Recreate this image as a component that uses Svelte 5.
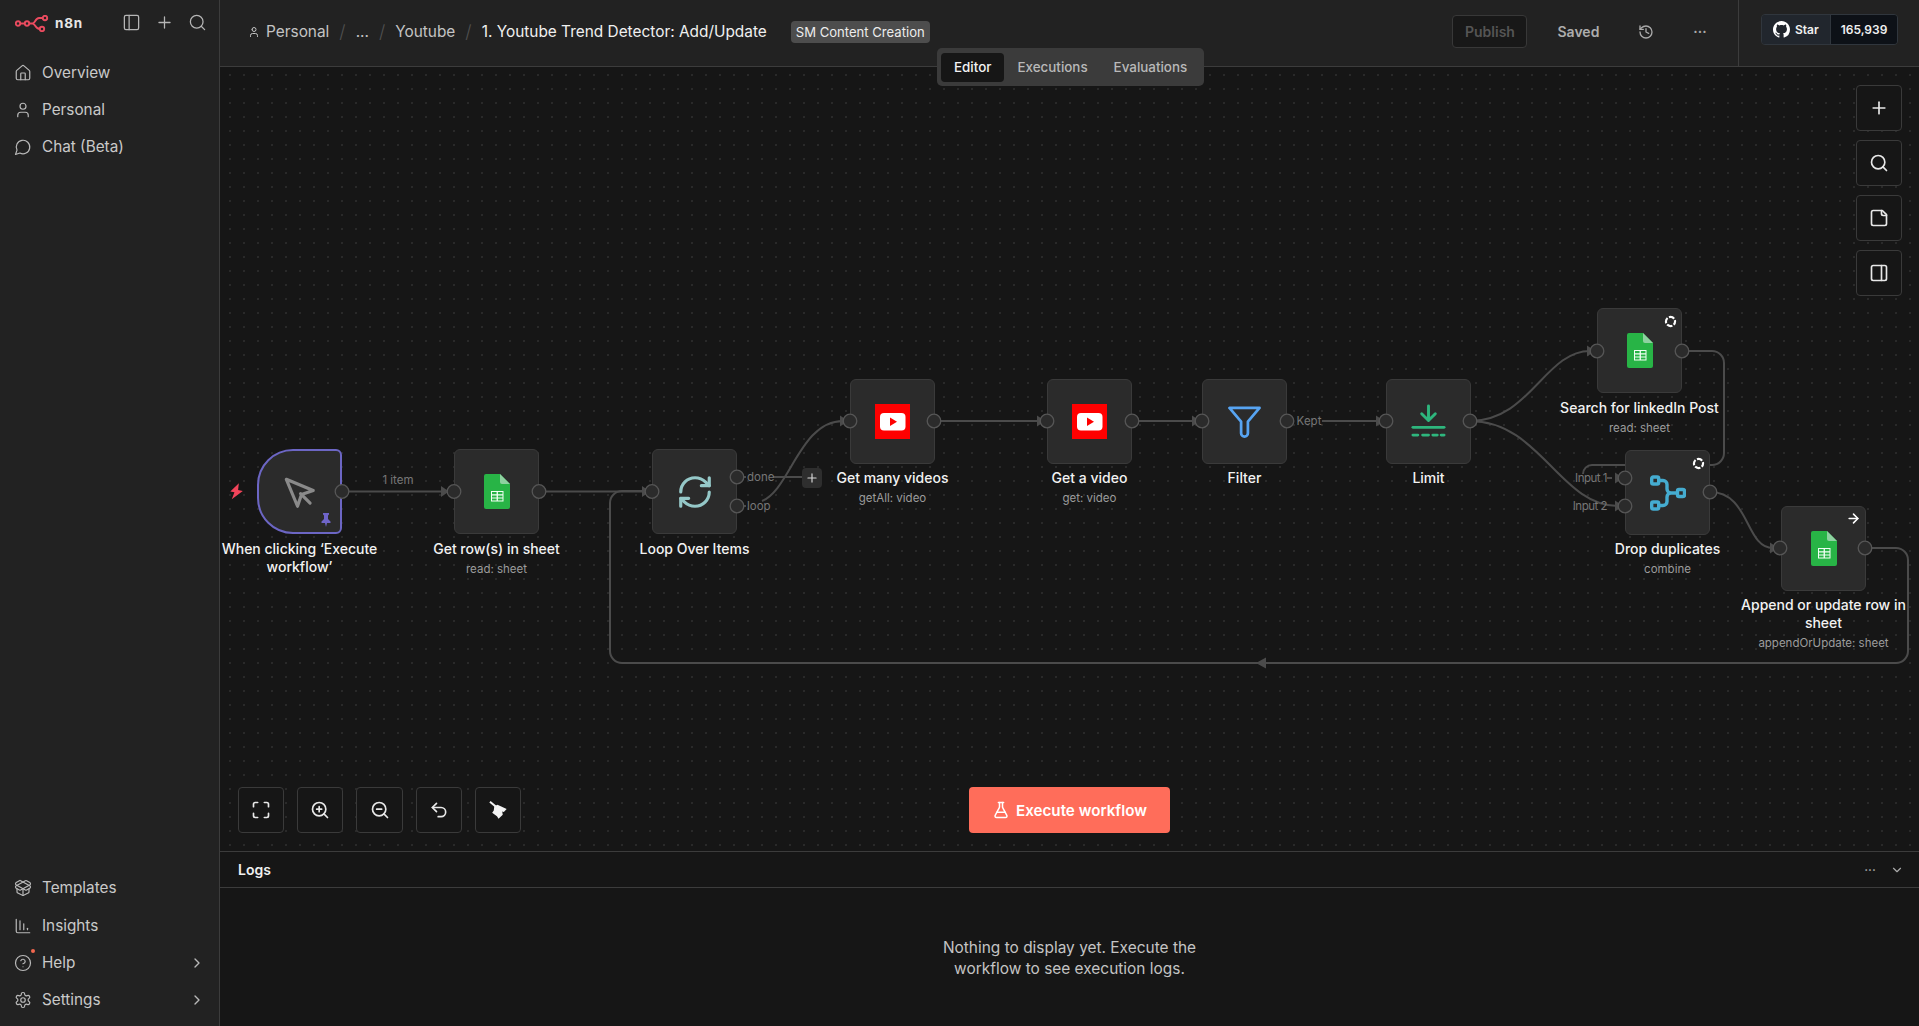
<script>
  const c = (x, y, r) => `M${x - r} ${y}a${r} ${r} 0 1 0 ${2 * r} 0a${r} ${r} 0 1 0 ${-2 * r} 0`;
  const I = {
    house: ['M15 21v-8a1 1 0 0 0-1-1h-4a1 1 0 0 0-1 1v8', 'M3 10a2 2 0 0 1 .709-1.528l7-5.999a2 2 0 0 1 2.582 0l7 5.999A2 2 0 0 1 21 10v9a2 2 0 0 1-2 2H5a2 2 0 0 1-2-2z'],
    user: ['M19 21v-2a4 4 0 0 0-4-4H9a4 4 0 0 0-4 4v2', c(12, 7, 4)],
    chat: ['M7.9 20A9 9 0 1 0 4 16.1L2 22Z'],
    panelL: ['M5 3h14a2 2 0 0 1 2 2v14a2 2 0 0 1-2 2H5a2 2 0 0 1-2-2V5a2 2 0 0 1 2-2z', 'M9 3v18'],
    panelR: ['M5 3h14a2 2 0 0 1 2 2v14a2 2 0 0 1-2 2H5a2 2 0 0 1-2-2V5a2 2 0 0 1 2-2z', 'M15 3v18'],
    plus: ['M5 12h14', 'M12 5v14'],
    search: [c(11, 11, 8), 'm21 21-4.3-4.3'],
    box: ['M12 22v-9', 'M15.17 2.21a1.67 1.67 0 0 1 1.63 0L21 4.57a1.93 1.93 0 0 1 0 3.36L8.82 14.79a1.655 1.655 0 0 1-1.64 0L3 12.43a1.93 1.93 0 0 1 0-3.36z', 'M20 13v3.87a2.06 2.06 0 0 1-1.11 1.83l-6 3.08a1.93 1.93 0 0 1-1.78 0l-6-3.08A2.06 2.06 0 0 1 4 16.87V13', 'M21 12.43a1.93 1.93 0 0 0 0-3.36L8.83 2.2a1.64 1.64 0 0 0-1.63 0L3 4.57a1.93 1.93 0 0 0 0 3.36l12.18 6.86a1.636 1.636 0 0 0 1.63 0z'],
    chart: ['M3 3v16a2 2 0 0 0 2 2h16', 'M18 17v-2', 'M13 17V9', 'M8 17V5'],
    help: [c(12, 12, 10), 'M9.09 9a3 3 0 0 1 5.83 1c0 2-3 3-3 3', 'M12 17h.01'],
    gear: ['M12.22 2h-.44a2 2 0 0 0-2 2v.18a2 2 0 0 1-1 1.73l-.43.25a2 2 0 0 1-2 0l-.15-.08a2 2 0 0 0-2.73.73l-.22.38a2 2 0 0 0 .73 2.73l.15.1a2 2 0 0 1 1 1.72v.51a2 2 0 0 1-1 1.74l-.15.09a2 2 0 0 0-.73 2.73l.22.38a2 2 0 0 0 2.73.73l.15-.08a2 2 0 0 1 2 0l.43.25a2 2 0 0 1 1 1.73V20a2 2 0 0 0 2 2h.44a2 2 0 0 0 2-2v-.18a2 2 0 0 1 1-1.73l.43-.25a2 2 0 0 1 2 0l.15.08a2 2 0 0 0 2.73-.73l.22-.39a2 2 0 0 0-.73-2.73l-.15-.08a2 2 0 0 1-1-1.74v-.5a2 2 0 0 1 1-1.74l.15-.09a2 2 0 0 0 .73-2.73l-.22-.38a2 2 0 0 0-2.73-.73l-.15.08a2 2 0 0 1-2 0l-.43-.25a2 2 0 0 1-1-1.73V4a2 2 0 0 0-2-2z', c(12, 12, 3)],
    chev: ['m9 18 6-6-6-6'],
    chevD: ['m6 9 6 6 6-6'],
    history: ['M3 12a9 9 0 1 0 9-9 9.75 9.75 0 0 0-6.74 2.74L3 8', 'M3 3v5h5', 'M12 7v5l4 2'],
    note: ['M16 3H5a2 2 0 0 0-2 2v14a2 2 0 0 0 2 2h14a2 2 0 0 0 2-2V8Z', 'M15 3v4a2 2 0 0 0 2 2h4'],
    max: ['M8 3H5a2 2 0 0 0-2 2v3', 'M21 8V5a2 2 0 0 0-2-2h-3', 'M16 21h3a2 2 0 0 0 2-2v-3', 'M3 16v3a2 2 0 0 0 2 2h3'],
    zoomIn: [c(11, 11, 8), 'm21 21-4.3-4.3', 'M11 8v6', 'M8 11h6'],
    zoomOut: [c(11, 11, 8), 'm21 21-4.3-4.3', 'M8 11h6'],
    undo: ['M9 14 4 9l5-5', 'M4 9h10.5a5.5 5.5 0 0 1 5.5 5.5a5.5 5.5 0 0 1-5.5 5.5H11'],
    flask: ['M14 2v6a2 2 0 0 0 .245.96l5.51 10.08A2 2 0 0 1 18 22H6a2 2 0 0 1-1.755-2.96l5.51-10.08A2 2 0 0 0 10 8V2', 'M6.453 15h11.094', 'M8.5 2h7'],
    pointer: ['M4 4l7.07 17 2.51-7.39L21 11.07z', 'm13 13 6 6'],
    loop: ['M3 12a9 9 0 0 1 9-9 9.75 9.75 0 0 1 6.74 2.74L21 8', 'M21 3v5h-5', 'M21 12a9 9 0 0 1-9 9 9.75 9.75 0 0 1-6.74-2.74L3 16', 'M8 16H3v5'],
    arrow: ['M5 12h14', 'm12 5 7 7-7 7']
  };

  const topNav = [['house', 'Overview'], ['user', 'Personal'], ['chat', 'Chat (Beta)']];
  const bottomNav = [['box', 'Templates', false], ['chart', 'Insights', false], ['help', 'Help', true], ['gear', 'Settings', true]];
  const rail = ['plus', 'search', 'note', 'panelR'];
  const tools = ['max', 'zoomIn', 'zoomOut', 'undo'];

  const nodes = [
    { x: 257, y: 449, kind: 'pointer', title: 'When clicking ‘Execute workflow’', trigger: true },
    { x: 454, y: 449, kind: 'sheet', title: 'Get row(s) in sheet', sub: 'read: sheet' },
    { x: 652, y: 449, kind: 'loop', title: 'Loop Over Items' },
    { x: 850, y: 379, kind: 'yt', title: 'Get many videos', sub: 'getAll: video', up: true },
    { x: 1047, y: 379, kind: 'yt', title: 'Get a video', sub: 'get: video', up: true },
    { x: 1202, y: 379, kind: 'filter', title: 'Filter', up: true },
    { x: 1386, y: 379, kind: 'limit', title: 'Limit', up: true },
    { x: 1597, y: 308, kind: 'sheet', title: 'Search for linkedIn Post', sub: 'read: sheet', badge: 'once' },
    { x: 1625, y: 450, kind: 'merge', title: 'Drop duplicates', sub: 'combine', badge: 'once', up: true },
    { x: 1781, y: 506, kind: 'sheet', title: 'Append or update row in sheet', sub: 'appendOrUpdate: sheet', badge: 'arrow', up: true }
  ];

  const edges = [
    'M342 491.5H445', 'M539 491.5H645',
    'M1865 548H1896a12 12 0 0 1 12 12V651a12 12 0 0 1-12 12H622a12 12 0 0 1-12-12V503a12 12 0 0 1 12-12H645',
    'M737 477H746', 'M773 477H802', 'M737 506H746',
    'M762 501C790 490 800 421 843 421',
    'M934 421H1040', 'M1132 421H1195', 'M1287 421H1292', 'M1322 421H1379',
    'M1470 421C1530 421 1545 351 1590 351',
    'M1470 421C1540 421 1560 506 1618 506',
    'M1682 351H1712a12 12 0 0 1 12 12V453a12 12 0 0 1-12 12H1592a9 9 0 0 0-9 9',
    'M1710 492C1750 492 1745 548 1773 548',
    'M1607 478H1612'
  ];
  const arrows = [[449, 491.5], [650, 491.5], [848, 421], [1045, 421], [1200, 421], [1384, 421], [1595, 351], [1623, 478], [1623, 506], [1778, 548]];
  const handles = [[342, 491.5], [454, 491.5], [539, 491.5], [652, 491.5], [737, 477], [737, 506], [850, 421], [934, 421], [1047, 421], [1132, 421], [1202, 421], [1287, 421], [1386, 421], [1470, 421], [1597, 351], [1682, 351], [1625, 478], [1625, 506], [1710, 492], [1780, 548], [1865, 548]];
  const labels = [['1 item', 398, 484, 'middle', ''], ['done', 747, 481, 'start', ''], ['loop', 747, 510, 'start', ''], ['Kept', 1309, 425, 'middle', ''], ['Input 1', 1607, 482, 'end', 'tight'], ['Input 2', 1607, 510, 'end', 'tight']];
</script>

{#snippet ic(name, cls = 'i18')}
  <svg class={cls} viewBox="0 0 24 24" fill="none" stroke="currentColor" stroke-width="2" stroke-linecap="round" stroke-linejoin="round">
    {#each I[name] as d}<path {d} />{/each}
  </svg>
{/snippet}

{#snippet nodeIcon(kind)}
  {#if kind === 'sheet'}
    <svg class="nicon sheet" viewBox="0 0 26 35">
      <path d="M2 0H16L26 10V33a2 2 0 0 1-2 2H2a2 2 0 0 1-2-2V2a2 2 0 0 1 2-2z" fill="#28b446" />
      <path d="M16 0L26 10H18a2 2 0 0 1-2-2z" fill="#8ed1a0" />
      <path d="M7 17h12.5v10.5H7z M8 18v2.2h4.6V18z M13.9 18v2.2h4.6V18z M8 21.5v2h4.6v-2z M13.9 21.5v2h4.6v-2z M8 24.6v2h4.6v-2z M13.9 24.6v2h4.6v-2z" fill="#f1fff4" fill-rule="evenodd" />
    </svg>
  {:else if kind === 'yt'}
    <svg class="nicon yt" viewBox="0 0 35 35">
      <rect width="35" height="35" fill="#ff0000" />
      <rect x="5" y="9" width="25.5" height="17.5" rx="4" fill="#fff" />
      <path d="M15 13.5l7 4.2-7 4.2z" fill="#ff0000" />
    </svg>
  {:else if kind === 'pointer'}
    <span class="pointer">{@render ic('pointer', 'nicon p')}</span>
  {:else if kind === 'loop'}
    <span class="loop">{@render ic('loop', 'nicon l')}</span>
  {:else if kind === 'filter'}
    <svg class="nicon f" viewBox="0 0 34 34" fill="none" stroke="#57a4f2" stroke-width="2.8" stroke-linejoin="round">
      <path d="M1.5 2H32.5L20.5 16V28a3.5 3.5 0 0 1-7 0V16z" />
    </svg>
  {:else if kind === 'limit'}
    <svg class="nicon" viewBox="0 0 36 36" fill="none" stroke="#2eb67d" stroke-width="3" stroke-linecap="round" stroke-linejoin="round">
      <path d="M18 2V16M11 10l7 7 7-7" />
      <path d="M2 24H34" />
      <path d="M2 32H7M12 32H18M22.500 32H27M31 32H34" />
    </svg>
  {:else if kind === 'merge'}
    <svg class="nicon m" viewBox="0 0 36 36" fill="none" stroke="#45acd0" stroke-width="3.4" stroke-linejoin="round">
      <rect x="1.700" y="2" width="7" height="7" rx="1.500" />
      <rect x="1.700" y="27" width="7" height="7" rx="1.500" />
      <rect x="27.500" y="14.500" width="7" height="7" rx="1.500" />
      <path d="M8.700 5.500H13a4 4 0 0 1 4 4V14a4 4 0 0 0 4 4h6.500M8.700 30.500H13a4 4 0 0 0 4-4V22a4 4 0 0 1 4-4" />
    </svg>
  {/if}
{/snippet}

<div class="app">
  <aside class="side">
    <div class="brand">
      <svg class="logo" viewBox="0 0 34 17" fill="none" stroke="#ea4b5f" stroke-width="1.900">
        <circle cx="3" cy="8.500" r="2.200" />
        <circle cx="12" cy="8.500" r="2.200" />
        <circle cx="30" cy="3" r="2.200" />
        <circle cx="27" cy="14" r="2.200" />
        <path d="M5.200 8.500H9.800M14.200 8.500H17.500C20.500 8.500 20 3 24 3H27.800M17.500 8.500C20.500 8.500 20 14 24.800 14" />
      </svg>
      <span class="wordmark">n8n</span>
      <div class="brand-actions">
        {@render ic('panelL', 'i19 thin')}
        {@render ic('plus', 'i19 thin')}
        {@render ic('search', 'i19 thin')}
      </div>
    </div>
    <nav class="nav">
      {#each topNav as [icon, text]}
        <div class="item">{@render ic(icon, 'i18 thin')}<span>{text}</span></div>
      {/each}
    </nav>
    <nav class="nav bottom">
      {#each bottomNav as [icon, text, more]}
        <div class="item">
          <span class="iconwrap">{@render ic(icon, 'i18 thin')}{#if icon === 'help'}<i class="dot"></i>{/if}</span>
          <span>{text}</span>
          {#if more}<span class="more">{@render ic('chev', 'i16')}</span>{/if}
        </div>
      {/each}
    </nav>
  </aside>

  <main class="main">
    <header class="head">
      <div class="crumbs">
        {@render ic('user', 'i12')}
        <span class="crumb first">Personal</span>
        <span class="sep">/</span>
        <span class="crumb">...</span>
        <span class="sep">/</span>
        <span class="crumb">Youtube</span>
        <span class="sep">/</span>
        <span class="title">1. Youtube Trend Detector: Add/Update</span>
        <span class="tag">SM Content Creation</span>
      </div>
      <div class="actions">
        <button class="publish">Publish</button>
        <span class="saved">Saved</span>
        <span class="ha h1">{@render ic('history', 'i16')}</span>
        <span class="ha h2">•••</span>
      </div>
      <div class="gh-wrap">
        <div class="gh">
          <span class="gh-l">
            <svg class="gh-mark" viewBox="0 0 16 16" fill="#fff"><path d="M8 0C3.58 0 0 3.58 0 8c0 3.54 2.290 6.530 5.470 7.590.4.070.55-.17.55-.38 0-.19-.01-.82-.01-1.490-2.010.37-2.530-.49-2.690-.94-.09-.23-.48-.94-.82-1.130-.28-.15-.68-.52-.01-.53.63-.01 1.080.58 1.230.82.72 1.210 1.870.87 2.330.66.07-.52.28-.87.51-1.070-1.780-.2-3.640-.89-3.640-3.950 0-.87.31-1.590.82-2.150-.08-.2-.36-1.020.08-2.120 0 0 .67-.21 2.200.82.64-.18 1.320-.27 2-.27.68 0 1.360.09 2 .27 1.530-1.040 2.200-.82 2.200-.82.44 1.100.16 1.920.08 2.120.51.56.82 1.270.82 2.150 0 3.070-1.870 3.750-3.650 3.950.29.25.54.73.54 1.480 0 1.070-.01 1.930-.01 2.200 0 .21.15.46.55.38A8.013 8.013 0 0016 8c0-4.420-3.580-8-8-8z" /></svg>
            Star
          </span>
          <span class="gh-r">165,939</span>
        </div>
      </div>
    </header>

    <div class="tabs">
      <span class="tab on">Editor</span>
      <span class="tab">Executions</span>
      <span class="tab">Evaluations</span>
    </div>

    <section class="canvas">
      <svg class="layer" viewBox="220 67 1699 784">
        {#each edges as d}<path {d} fill="none" stroke="#4b4b4b" stroke-width="2" />{/each}
        <path d="M1256 663l10-5.500v11z" fill="#4b4b4b" />
      </svg>

      {#each nodes as n}
        <div class="node" class:trigger={n.trigger} class:up={n.up} style:left="{n.x - 220}px" style:top="{n.y - 67}px">
          <div class="box">
            {@render nodeIcon(n.kind)}
            {#if n.badge === 'once'}
              <svg class="badge" viewBox="0 0 12 12" fill="none" stroke="#fff" stroke-width="2"><circle cx="6" cy="6" r="4.200" stroke-dasharray="5.200 1.400" stroke-dashoffset="2" /></svg>
            {:else if n.badge === 'arrow'}
              <span class="badge-a">{@render ic('arrow', 'i13')}</span>
            {/if}
            {#if n.trigger}
              <svg class="pin" viewBox="0 0 12 14" fill="#6f65c9"><path d="M3 0h6v1.500L8 2.500V6l2.500 2.500V10H7l-1 4-1-4H1.500V8.500L4 6V2.500L3 1.500z" /></svg>
            {/if}
          </div>
          <div class="cap">
            <div class="cap-t">{n.title}</div>
            {#if n.sub}<div class="cap-s">{n.sub}</div>{/if}
          </div>
        </div>
      {/each}

      <svg class="layer" viewBox="220 67 1699 784">
        {#each arrows as [x, y]}<path d="M{x} {y}l-8-5.500v11z" fill="#4b4b4b" />{/each}
        {#each handles as [x, y]}<circle cx={x} cy={y} r="6.800" fill="#2b2b2b" stroke="#565656" stroke-width="1.300" />{/each}
        {#each labels as [t, x, y, a, k]}<text {x} {y} text-anchor={a} class="elabel {k}">{t}</text>{/each}
      </svg>

      <svg class="bolt" viewBox="0 0 12 14" fill="#f2445a"><path d="M6.500 0L1 8h3.500L3.500 14 11 5.500H7z" transform="rotate(12 6 7)" /></svg>
      <span class="addbtn">{@render ic('plus', 'i14')}</span>

      <div class="rail">
        {#each rail as r}<span class="cbtn">{@render ic(r, 'i20')}</span>{/each}
      </div>

      <div class="tools">
        {#each tools as t}<span class="cbtn">{@render ic(t, 'i20')}</span>{/each}
        <span class="cbtn">
          <svg class="i18" viewBox="0 0 17 17" fill="#f2f2f2"><path d="M.3 1.300L1.500 .1 7 4.600 5.700 5.900z" /><path d="M5 5L8 3.500 16.700 7.500 14 10.500 12.500 10 13 13 9 16.700 7.500 14.500 3 11 4.500 9z" /></svg>
        </span>
      </div>

      <button class="exec">{@render ic('flask', 'i18')}Execute workflow</button>
    </section>

    <section class="logs">
      <div class="logs-head">
        <span class="logs-t">Logs</span>
        <span class="logs-a">
          <span class="logs-d">•••</span>
          {@render ic('chevD', 'i14')}
        </span>
      </div>
      <div class="logs-body">
        <p>Nothing to display yet. Execute the<br />workflow to see execution logs.</p>
      </div>
    </section>
  </main>
</div>

<style>
  :global(body) { margin: 0; background: #161616; }
  .app { display: flex; width: 1919px; height: 1026px; overflow: hidden; font-family: Inter, "Noto Sans", sans-serif; color: #d6d6d6; }
  svg { display: block; flex: none; }
  .i12 { width: 12px; height: 12px; }
  .i13 { width: 15px; height: 15px; stroke-width: 2.500; }
  .i14 { width: 14px; height: 14px; }
  .i16 { width: 16px; height: 16px; }
  .i18 { width: 18px; height: 18px; }
  .i19 { width: 19px; height: 19px; }
  .i20 { width: 20px; height: 20px; }
  .thin { stroke-width: 1.600; }

  .side { width: 219px; flex: none; display: flex; flex-direction: column; background: #222222; border-right: 1px solid #3c3c3c; }
  .brand { height: 46px; display: flex; align-items: center; padding-left: 15px; color: #b5b5b5; }
  .logo { width: 34px; height: 17px; }
  .wordmark { margin-left: 6px; font-weight: 700; font-size: 13.500px; letter-spacing: .8px; color: #e6e6e6; }
  .brand-actions { display: flex; gap: 14px; margin-left: auto; padding-right: 12px; margin-top: -2px; align-items: center; }
  .nav { display: flex; flex-direction: column; padding-left: 14px; margin-top: 8px; }
  .nav.bottom { margin-top: auto; margin-bottom: 8px; }
  .nav.bottom .item:first-child { margin-bottom: 1px; }
  .item { height: 37px; display: flex; align-items: center; gap: 10px; font-size: 15.300px; color: #c9c9c9; padding-right: 14px; }
  .iconwrap { position: relative; display: block; }
  .dot { position: absolute; top: -5px; right: -3px; width: 4px; height: 4px; border-radius: 50%; background: #f2674f; }
  .more { margin-left: auto; color: #aaa; }
  .item svg { color: #b9b9b9; }

  .main { position: relative; flex: 1; display: flex; flex-direction: column; min-width: 0; }
  .head { height: 66px; flex: none; display: flex; align-items: stretch; background: #222222; border-bottom: 1px solid #3c3c3c; }
  .crumbs { display: flex; align-items: center; padding-left: 28px; font-size: 15.400px; color: #c4c4c4; margin-top: -3px; }
  .first { margin-left: 6px; }
  .sep { margin: 0 10px; color: #505050; font-size: 18px; font-weight: 300; }
  .title { color: #f0f0f0; font-size: 15.400px; }
  .tag { margin-left: 24px; height: 22px; line-height: 22px; padding: 0 5px; border-radius: 4px; background: #4d4d4d; color: #ececec; font-size: 13.100px; }
  .actions { margin-left: auto; display: flex; align-items: center; padding-right: 31px; font-size: 14px; font-weight: 600; margin-top: -3px; }
  .publish { width: 75px; height: 33px; box-sizing: border-box; border-radius: 4px; border: 1px solid #383838; background: #181818; color: #555; font: 600 14px Inter, sans-serif; padding: 0; }
  .saved { margin-left: 30px; color: #adadad; }
  .ha { color: #aaa; display: block; }
  .h1 { margin-left: 39px; }
  .h2 { margin-left: 39px; font-size: 7px; letter-spacing: .6px; font-weight: 400; }
  .gh-wrap { width: 181px; flex: none; border-left: 1px solid #3c3c3c; box-sizing: border-box; padding: 14px 0 0 22px; }
  .gh { display: flex; width: 137px; height: 31px; box-sizing: border-box; border: 1px solid #30363d; border-radius: 4px; overflow: hidden; font-size: 12px; font-weight: 600; color: #f0f0f0; }
  .gh-l { width: 68px; display: flex; align-items: center; gap: 5px; padding-left: 11px; background: #21262d; box-sizing: border-box; }
  .gh-mark { width: 17px; height: 17px; }
  .gh-r { flex: 1; display: flex; align-items: center; justify-content: center; background: #0d1117; border-left: 1px solid #30363d; }

  .tabs { position: absolute; z-index: 5; left: 717px; top: 48px; width: 267px; height: 38px; box-sizing: border-box; padding: 5px 4px 4px; display: flex; align-items: center; background: #3b3b3b; border-radius: 5px; font-size: 13.400px; color: #b9b9b9; font-weight: 500; }
  .tab { padding: 0 13px; line-height: 29px; }
  .tab.on { background: #161616; color: #f2f2f2; border-radius: 4px; padding: 0 13px; }

  .canvas { position: relative; flex: 1; background-color: #161616; background-image: radial-gradient(circle, #2a2a2a .7px, transparent .9px); background-size: 14px 14px; background-position: 3px 1px; }
  .layer { position: absolute; inset: 0; width: 1699px; height: 784px; pointer-events: none; }
  .elabel { font: 11.500px Inter, sans-serif; fill: #777; }
  .tight { letter-spacing: -.5px; }

  .node { position: absolute; width: 85px; }
  .box { position: relative; height: 85px; box-sizing: border-box; background: #2b2b2b; border: 1px solid #3a3a3a; border-radius: 6px; display: flex; align-items: center; justify-content: center; }
  .trigger .box { border: 2px solid #6c66c4; border-radius: 36px 6px 6px 36px; }
  .cap { position: absolute; left: -45px; right: -45px; top: 91px; text-align: center; }
  .up .cap { top: 90px; }
  .cap-t { font-size: 14px; line-height: 18px; font-weight: 500; color: #f2f2f2; }
  .cap-s { font-size: 11.500px; line-height: 16px; margin-top: 3px; color: #9c9c9c; }
  .nicon { width: 35px; height: 35px; }
  .sheet { width: 26px; }
  .pointer { color: #8a8a8a; display: block; margin-left: -2px; }
  .pointer :global(svg) { width: 38px; height: 38px; }
  .loop { color: #95c8c8; display: block; }
  .loop :global(svg) { width: 38px; height: 38px; }
  .f { width: 33px; height: 33px; margin-top: 1px; }
  .m { width: 36px; height: 36px; }
  .badge { position: absolute; right: 4.500px; top: 6px; width: 13px; height: 13px; }
  .badge-a { position: absolute; right: 4px; top: 4px; color: #fff; }
  .pin { position: absolute; right: 8px; bottom: 5px; width: 12px; height: 14px; }
  .bolt { position: absolute; left: 9px; top: 416px; width: 15px; height: 17px; }
  .addbtn { position: absolute; left: 582px; top: 401px; width: 20px; height: 20px; border-radius: 4px; background: #2e2e2e; color: #d8d8d8; display: flex; align-items: center; justify-content: center; }

  .cbtn { width: 46px; height: 46px; box-sizing: border-box; border: 1px solid #3a3a3a; border-radius: 4px; background: #161616; color: #e8e8e8; display: flex; align-items: center; justify-content: center; }
  .rail { position: absolute; top: 18px; right: 17px; display: flex; flex-direction: column; gap: 9px; }
  .tools { position: absolute; left: 18px; top: 720px; display: flex; gap: 13px; }
  .tools .cbtn:nth-child(3) { width: 47px; }
  .exec { position: absolute; left: 749px; top: 720px; width: 201px; height: 46px; border: 0; border-radius: 4px; background: #ff6d5a; color: #fff; font: 600 15.200px Inter, sans-serif; display: flex; align-items: center; justify-content: center; gap: 6px; padding: 0; }

  .logs { height: 175px; flex: none; box-sizing: border-box; background: #161616; border-top: 1px solid #3c3c3c; display: flex; flex-direction: column; }
  .logs-head { height: 36px; flex: none; box-sizing: border-box; border-bottom: 1px solid #3c3c3c; display: flex; align-items: center; padding: 0 15px 0 18px; }
  .logs-t { font-size: 14px; font-weight: 600; color: #f0f0f0; }
  .logs-a { margin-left: auto; display: flex; align-items: center; gap: 14px; color: #aaa; }
  .logs-d { font-size: 6px; letter-spacing: .5px; }
  .logs-body { flex: 1; display: flex; justify-content: center; }
  .logs-body p { margin: 49px 0 0; text-align: center; font-size: 15.450px; line-height: 21px; color: #c4c4c4; }
</style>
